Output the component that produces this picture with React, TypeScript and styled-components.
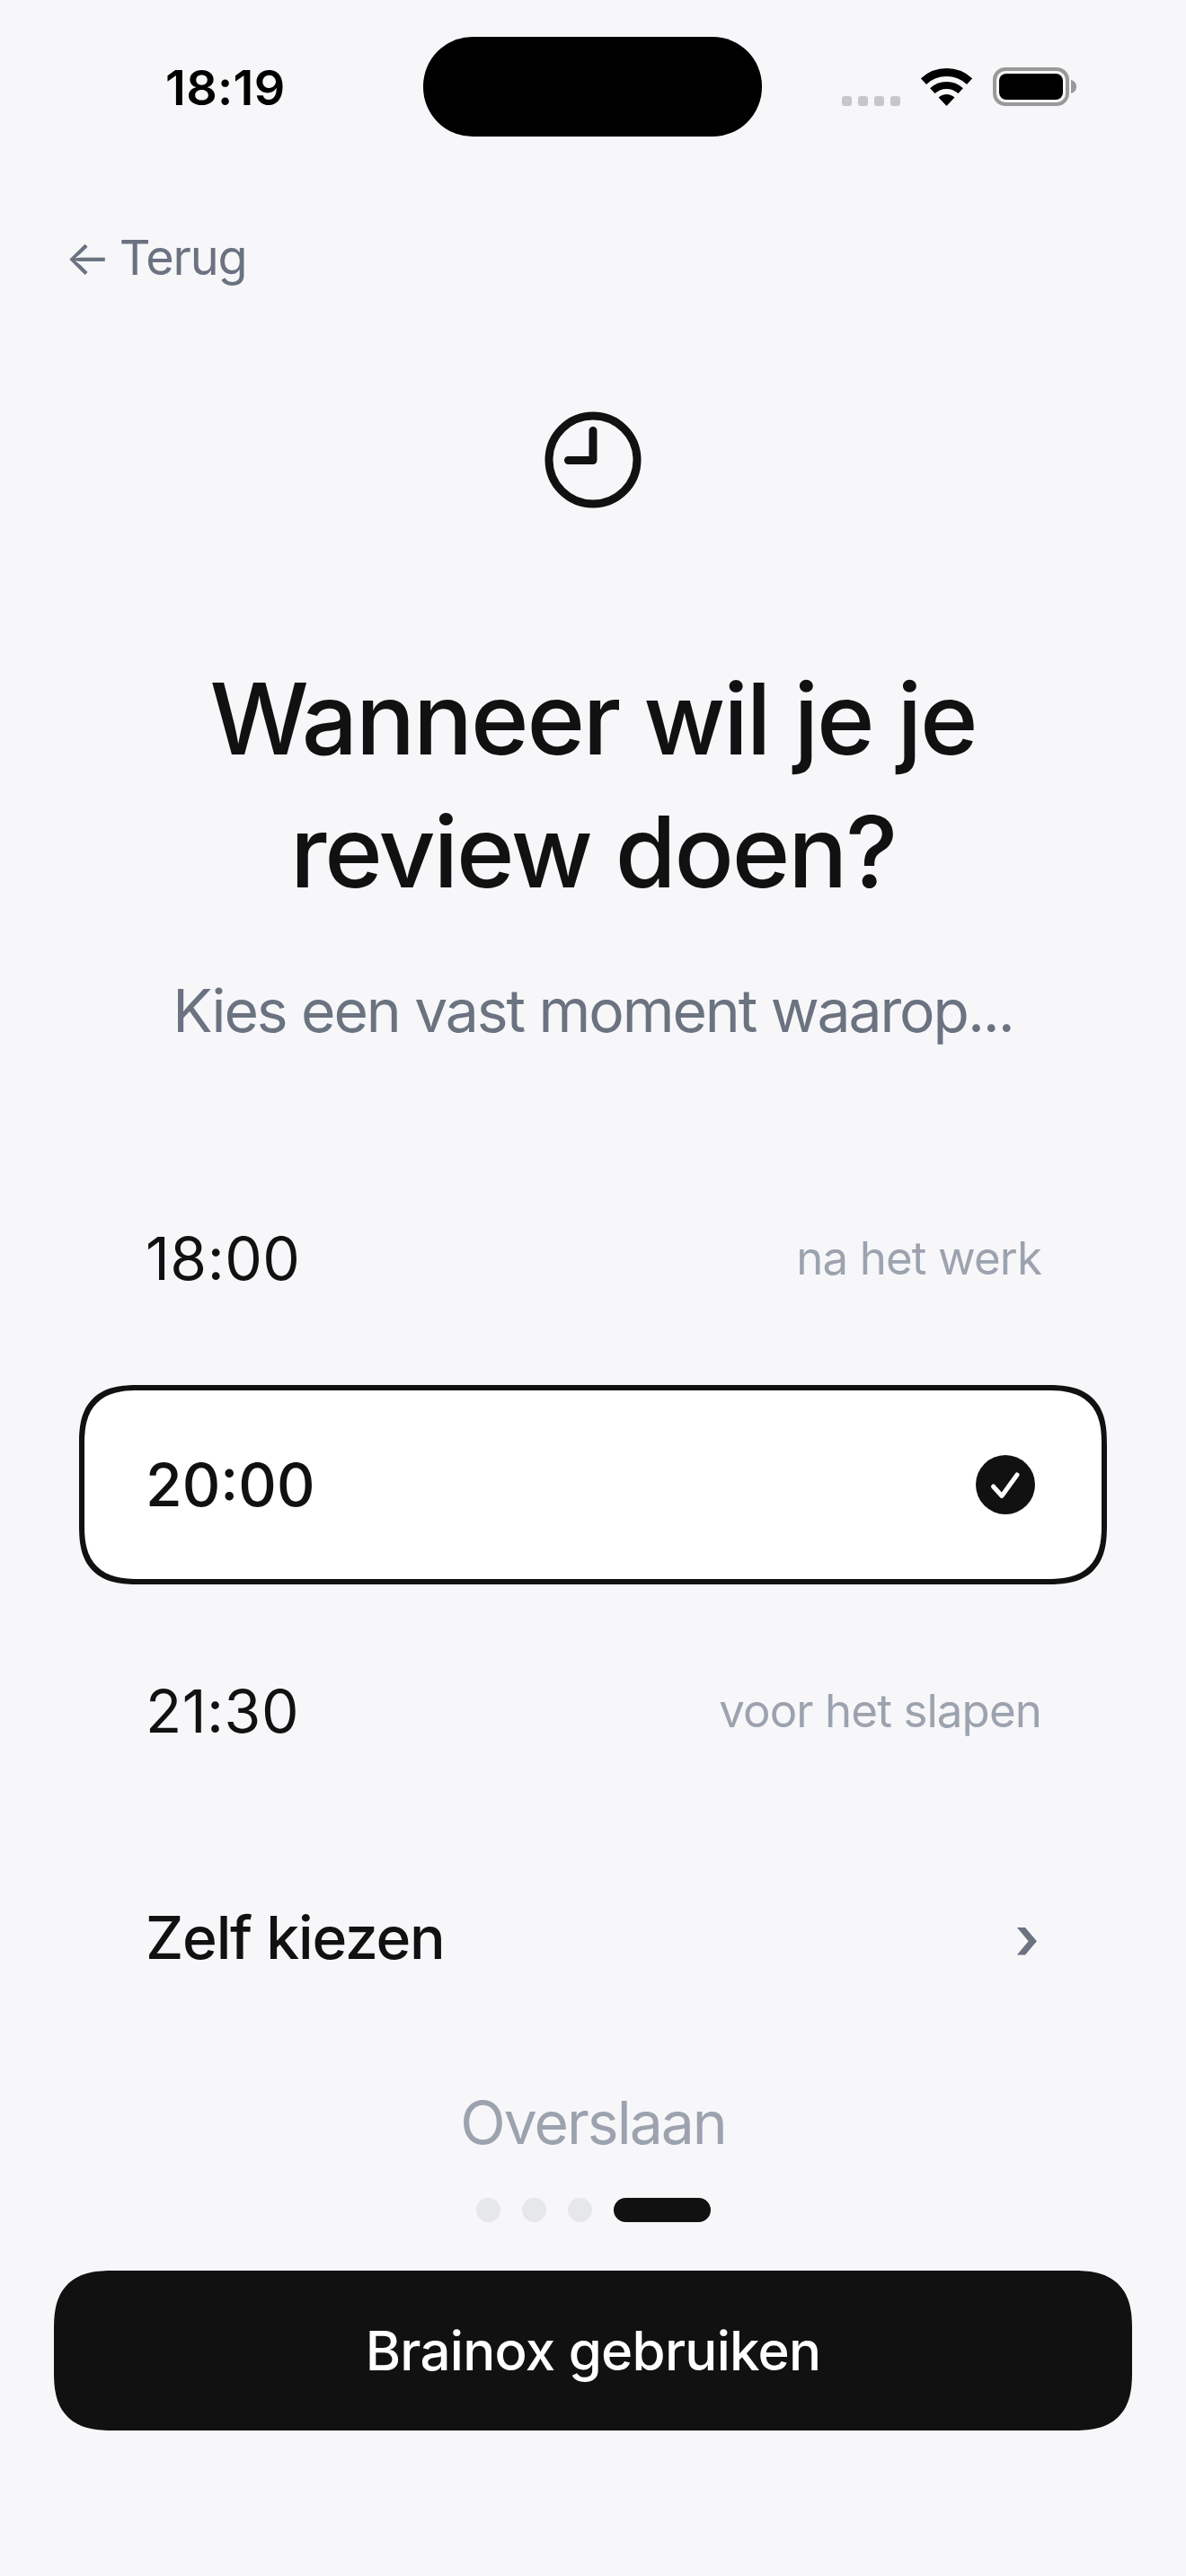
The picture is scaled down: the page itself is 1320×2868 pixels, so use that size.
import React from 'react';
import styled, { createGlobalStyle } from 'styled-components';

const GlobalStyle = createGlobalStyle`
  html, body {
    margin: 0;
    padding: 0;
    background: #f7f7fa;
  }
  body {
    font-family: 'Inter', 'Liberation Sans', sans-serif;
    color: #111111;
  }
`;

const Page = styled.main`
  width: 1320px;
  height: 2868px;
  background: #f7f7fa;
  display: flex;
  flex-direction: column;
  overflow: hidden;
`;

const StatusBar = styled.header`
  display: flex;
  align-items: flex-start;
  height: 111px;
  padding-top: 41px;
`;

const StatusTime = styled.span`
  width: 471px;
  padding-left: 184px;
  box-sizing: border-box;
  margin-top: 26px;
  font-size: 54px;
  line-height: 62px;
  font-weight: 600;
  letter-spacing: 0.3px;
  color: #000;
`;

const Island = styled.div`
  width: 377px;
  height: 111px;
  border-radius: 55px;
  background: #000;
`;

const StatusIcons = styled.div`
  display: flex;
  align-items: flex-end;
  margin: 34px 0 0 89px;
`;

const SignalDots = styled.div`
  display: flex;
  gap: 7px;
  margin-right: 23px;
`;

const SignalDot = styled.span`
  width: 11px;
  height: 11px;
  border-radius: 3px;
  background: #c7c7c9;
`;

const BatteryIcon = styled.svg`
  margin-left: 23px;
`;

const BackLink = styled.a`
  margin: 102px 0 0 72px;
  font-size: 54px;
  line-height: 66px;
  letter-spacing: -1.2px;
  word-spacing: -3.5px;
  color: #6b7280;
`;

const IconWrap = styled.div`
  display: flex;
  justify-content: center;
  margin-top: 138px;
`;

const Title = styled.h1`
  margin: 160px 0 0;
  text-align: center;
  font-size: 110px;
  line-height: 148px;
  font-weight: 500;
  letter-spacing: -2.2px;
  color: #111111;
`;

const Subtitle = styled.p`
  margin: 61px 0 0;
  text-align: center;
  font-size: 66px;
  line-height: 84px;
  letter-spacing: -2.1px;
  color: #6b7280;
`;

const Options = styled.ul`
  list-style: none;
  margin: 123px 0 0;
  padding: 0 88px;
  display: flex;
  flex-direction: column;
  gap: 30px;
`;

const Option = styled.li<{ $selected?: boolean }>`
  box-sizing: border-box;
  height: 222px;
  padding: 0 ${({ $selected }) => ($selected ? '74px' : '75px')} 0 ${({ $selected }) => ($selected ? '68px' : '74px')};
  display: flex;
  align-items: center;
  justify-content: space-between;
  border-radius: 66px;
  corner-shape: superellipse(1.4);
  border: ${({ $selected }) => ($selected ? '6px solid #111111' : 'none')};
  background: ${({ $selected }) => ($selected ? '#ffffff' : 'transparent')};
`;

const OptionTime = styled.span<{ $selected?: boolean }>`
  font-size: 66px;
  line-height: 80px;
  font-weight: ${({ $selected }) => ($selected ? 500 : 400)};
  letter-spacing: ${({ $selected }) => ($selected ? '0' : '0.5px')};
  color: #111111;
`;

const OptionLabel = styled.span`
  font-size: 66px;
  line-height: 78px;
  font-weight: 500;
  letter-spacing: -1.2px;
  color: #111111;
`;

const OptionHint = styled.span`
  font-size: 51px;
  line-height: 62px;
  letter-spacing: -0.9px;
  margin-right: -2px;
  color: #9ca3af;
`;

const Chevron = styled.span`
  font-size: 66px;
  line-height: 80px;
  font-weight: 600;
  color: #6b7280;
`;

const CheckBadge = styled.svg`
  display: block;
`;

const Skip = styled.button`
  margin: 55px auto 0;
  padding: 0;
  border: none;
  background: none;
  font-family: inherit;
  font-size: 66px;
  line-height: 80px;
  letter-spacing: -2px;
  color: #9ca3af;
`;

const Pager = styled.div`
  display: flex;
  justify-content: center;
  gap: 24px;
  margin-top: 44px;
`;

const PagerDot = styled.span<{ $active?: boolean }>`
  width: ${({ $active }) => ($active ? '108px' : '27px')};
  height: 27px;
  border-radius: 14px;
  background: ${({ $active }) => ($active ? '#111111' : '#e5e7eb')};
`;

const PrimaryButton = styled.button`
  margin: 54px 60px 0;
  height: 178px;
  border: none;
  border-radius: 66px;
  corner-shape: superellipse(1.4);
  background: #111111;
  color: #ffffff;
  font-family: inherit;
  font-size: 60px;
  font-weight: 500;
  letter-spacing: -0.75px;
`;

const options = [
  { time: '18:00', hint: 'na het werk' },
  { time: '20:00', selected: true },
  { time: '21:30', hint: 'voor het slapen' },
];

const WifiIcon = () => (
  <svg width="57" height="42" viewBox="0 0 57 42" fill="none">
    <path d="M2.9 14.6A37.5 37.5 0 0 1 54.1 14.6" stroke="#000" strokeWidth="9" />
    <path d="M12.8 25.2A23 23 0 0 1 44.2 25.2" stroke="#000" strokeWidth="8" />
    <path d="M28.5 42L19.6 32.5A13 13 0 0 1 37.4 32.5Z" fill="#000" />
  </svg>
);

const ClockIcon = () => (
  <svg width="108" height="108" viewBox="0 0 108 108" fill="none" stroke="#111111" strokeWidth="9" strokeLinecap="round" strokeLinejoin="round">
    <circle cx="54" cy="54" r="49" />
    <path d="M54 21.5V54.5H26.5" />
  </svg>
);

export default function App() {
  return (
    <Page>
      <GlobalStyle />
      <StatusBar>
        <StatusTime>18:19</StatusTime>
        <Island />
        <StatusIcons>
          <SignalDots>
            <SignalDot />
            <SignalDot />
            <SignalDot />
            <SignalDot />
          </SignalDots>
          <WifiIcon />
          <BatteryIcon width="93" height="43" viewBox="0 0 93 43" fill="none">
            <rect x="2" y="2" width="81" height="39" rx="12" stroke="#999999" strokeWidth="4" />
            <rect x="7" y="7" width="71" height="29" rx="8" fill="#000" />
            <path d="M87 14C91 15 93 18 93 21.5C93 25 91 28 87 29Z" fill="#999999" />
          </BatteryIcon>
        </StatusIcons>
      </StatusBar>

      <BackLink>← Terug</BackLink>

      <IconWrap>
        <ClockIcon />
      </IconWrap>

      <Title>
        Wanneer wil je je
        <br />
        review doen?
      </Title>
      <Subtitle>Kies een vast moment waarop...</Subtitle>

      <Options>
        {options.map((option) => (
          <Option key={option.time} $selected={option.selected}>
            <OptionTime $selected={option.selected}>{option.time}</OptionTime>
            {option.selected ? (
              <CheckBadge width="66" height="66" viewBox="0 0 66 66">
                <circle cx="33" cy="33" r="33" fill="#111111" />
                <path d="M19.5 35L29 45.5L46 22" fill="none" stroke="#fff" strokeWidth="5" strokeLinecap="round" strokeLinejoin="round" />
              </CheckBadge>
            ) : (
              <OptionHint>{option.hint}</OptionHint>
            )}
          </Option>
        ))}
        <Option>
          <OptionLabel>Zelf kiezen</OptionLabel>
          <Chevron>›</Chevron>
        </Option>
      </Options>

      <Skip>Overslaan</Skip>
      <Pager>
        <PagerDot />
        <PagerDot />
        <PagerDot />
        <PagerDot $active />
      </Pager>
      <PrimaryButton>Brainox gebruiken</PrimaryButton>
    </Page>
  );
}
